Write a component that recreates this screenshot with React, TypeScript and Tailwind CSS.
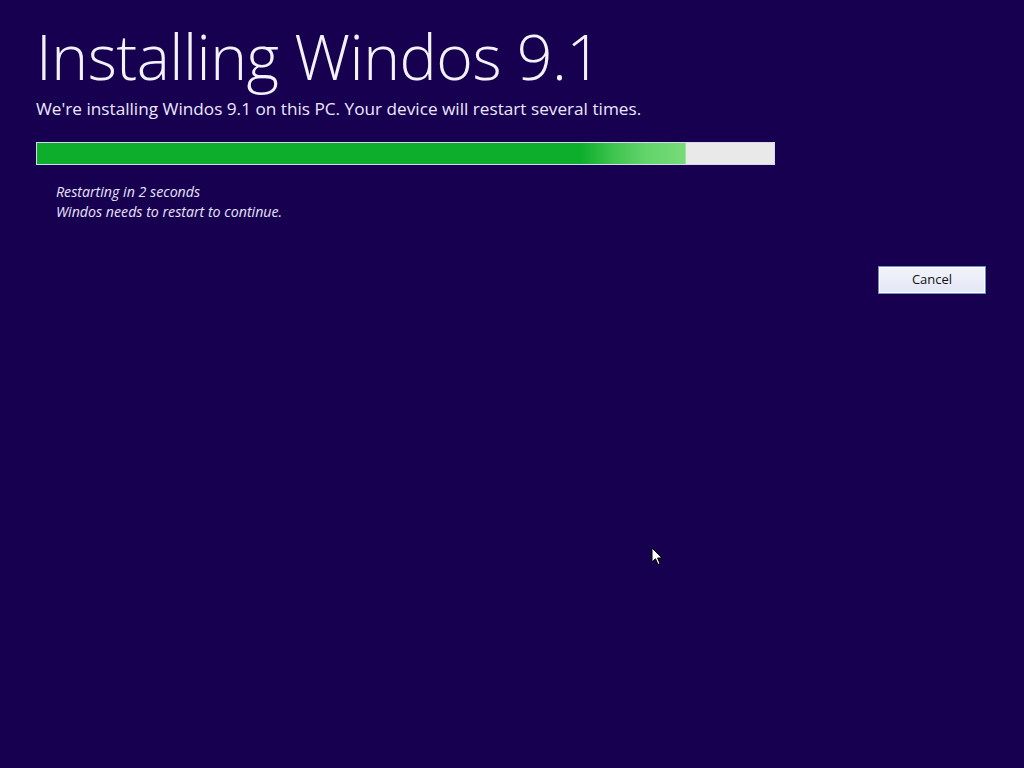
import React from "react";

const progress = 88;

function Cursor() {
  return (
    <svg
      className="absolute left-[651px] top-[547px]"
      width="14"
      height="20"
      viewBox="0 0 14 20"
    >
      <path
        d="M1 1 L1 15 L4.5 11.8 L7 17.5 L9 16.6 L6.6 11 L11 11 Z"
        fill="#ffffff"
        stroke="#000000"
        strokeWidth="1"
        strokeLinejoin="miter"
      />
    </svg>
  );
}

export default function App() {
  return (
    <div
      className="relative w-[1024px] h-[768px] overflow-hidden bg-[#180050] text-white"
      style={{ fontFamily: '"Open Sans", "Noto Sans", sans-serif' }}
    >
      <div className="flex flex-col pl-[36px] pt-[20px]">
        <h1 className="text-[62.5px] font-light leading-[72px] tracking-[-0.5px] text-[#f4f2ff]">
          Installing Windos 9.1
        </h1>
        <p className="text-[17.2px] leading-[22px] mt-[6px] text-[#ece8ff]">
          We're installing Windos 9.1 on this PC. Your device will restart several times.
        </p>

        <div className="mt-[22px] w-[739px] h-[23px] border border-[#d8d8e8] bg-[#e9e9e9] flex">
          <div
            className="h-full border-r border-[#9be59b] bg-[linear-gradient(to_right,#0eae2d_0%,#0eae2d_84%,#3fc44f_89%,#62d46a_94%,#76db78_100%)]"
            style={{ width: `${progress}%` }}
          />
        </div>

        <div className="pl-[20px] mt-[17px] flex flex-col text-[14.2px] italic leading-[20px] text-[#e8e4ff]">
          <span>Restarting in 2 seconds</span>
          <span>Windos needs to restart to continue.</span>
        </div>
      </div>

      <div className="flex justify-end pr-[38px] mt-[44px]">
        <button className="w-[108px] h-[28px] border border-[#6f8fc8] bg-[linear-gradient(to_bottom,#f2f3fb,#e3e6f4)] text-[13px] text-[#111] shadow-[inset_0_0_0_1px_#ffffff]">
          Cancel
        </button>
      </div>

      <Cursor />
    </div>
  );
}
